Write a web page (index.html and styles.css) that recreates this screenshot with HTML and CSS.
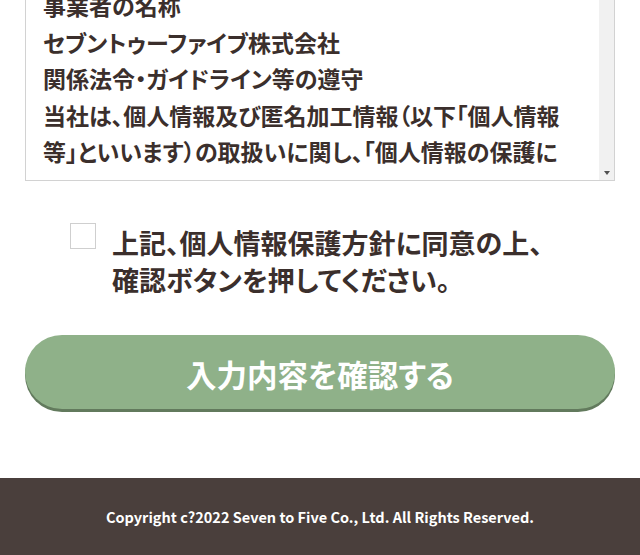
FILE: index.html
```html
<!DOCTYPE html>
<html lang="ja">
<head>
<meta charset="utf-8">
<title>個人情報保護方針</title>
<link rel="stylesheet" href="styles.css">
</head>
<body>
<main class="form">
  <div class="policy">
    <div class="policy-text">
      <p>事業者の名称</p>
      <p>セブントゥーファイブ株式会社</p>
      <p>関係法令・ガイドライン等の遵守</p>
      <p>当社は、個人情報及び匿名加工情報（以下「個人情報<br>等」といいます）の取扱いに関し、「個人情報の保護に</p>
    </div>
    <div class="scrollbar"><span class="arrow"></span></div>
  </div>
  <label class="agree">
    <span class="checkbox"></span>
    <span class="agree-text">上記、個人情報保護方針に同意の上、<br>確認ボタンを押してください。</span>
  </label>
  <button class="submit" type="button">入力内容を確認する</button>
</main>
<footer class="footer">
  <p class="copyright">Copyright c?2022 Seven to Five Co., Ltd. All Rights Reserved.</p>
</footer>
</body>
</html>
```
FILE: styles.css
```css
html, body {
  margin: 0;
  padding: 0;
  background: #fff;
}
body {
  font-family: "Noto Sans CJK JP", "Noto Sans", sans-serif;
  color: #3b2f2c;
  font-weight: 700;
  font-feature-settings: "palt";
  overflow: hidden;
}
.form {
  padding: 0 25px 69px 25px;
  display: flex;
  flex-direction: column;
}
.policy {
  margin-top: -24px;
  border: 1px solid #d2d2d2;
  display: flex;
  height: 203px;
  overflow: hidden;
}
.policy-text {
  flex: 1;
  padding: 10px 0 0 17px;
  font-size: 23px;
  line-height: 36.5px;
  overflow: hidden;
}
.policy-text p {
  margin: 0;
}
.scrollbar {
  width: 15px;
  background: #f1f1f1;
  display: flex;
  flex-direction: column;
  justify-content: flex-end;
  align-items: center;
  padding-bottom: 5px;
}
.arrow {
  width: 0;
  height: 0;
  border-left: 3.5px solid transparent;
  border-right: 3.5px solid transparent;
  border-top: 4px solid #505050;
}
.agree {
  display: flex;
  align-items: flex-start;
  margin-top: 42px;
  padding-left: 45px;
}
.checkbox {
  flex: none;
  width: 24px;
  height: 24px;
  border: 1px solid #cfcfcf;
  background: #fff;
}
.agree-text {
  margin-left: 16px;
  padding-top: 2px;
  font-size: 27px;
  line-height: 36.5px;
}
.submit {
  margin-top: 37px;
  height: 74px;
  border: none;
  border-radius: 37px;
  background: #8fb189;
  box-shadow: 0 3px 0 #627a5d;
  color: #fff;
  font-family: inherit;
  font-weight: 700;
  font-size: 30.5px;
  font-feature-settings: "palt";
  padding: 4px 0 0 0;
  cursor: pointer;
}
.footer {
  background: #4a3f3c;
  height: 80px;
  display: flex;
  justify-content: center;
  padding-top: 28px;
  box-sizing: border-box;
}
.copyright {
  margin: 0;
  color: #fff;
  font-size: 14.5px;
  line-height: 22px;
  font-weight: 700;
  font-feature-settings: normal;
}
```
